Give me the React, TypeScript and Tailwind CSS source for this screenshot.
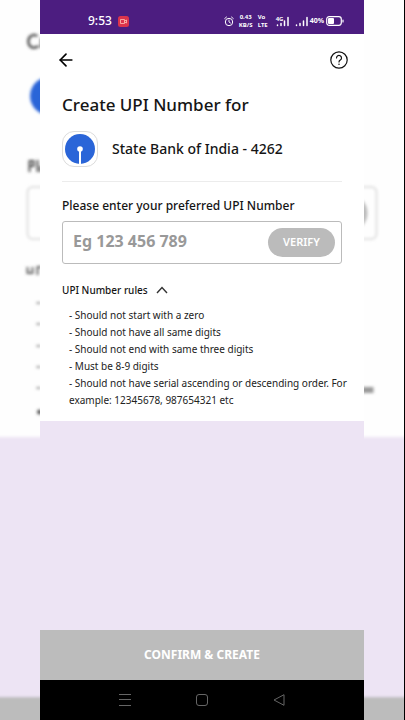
import { useState } from 'react';
import { ArrowLeft } from 'lucide-react';

const RULES = [
  'Should not start with a zero',
  'Should not have all same digits',
  'Should not end with same three digits',
  'Must be 8-9 digits',
  'Should not have serial ascending or descending order. For example: 12345678, 987654321 etc',
];

// Soft, enlarged echo of the screen that fills the sides
function Backdrop() {
  return (
    <svg className="absolute inset-0 h-full w-full" viewBox="0 0 405 720" preserveAspectRatio="xMidYMid slice" aria-hidden="true">
      <defs>
        <filter id="soft" x="-10%" y="-10%" width="120%" height="120%">
          <feGaussianBlur stdDeviation="1.800" />
        </filter>
      </defs>
      <rect width="405" height="720" fill="#fefefe" />
      <g filter="url(#soft)">
        <rect x="-20" y="437" width="445" height="260" fill="#ede4f4" />
        <rect x="-20" y="697" width="445" height="50" fill="#bcbcbc" />
        <path d="M38 36C32 33 28 38 29 43c1 5 6 6 10 3M42 38v10" fill="none" stroke="#555" strokeWidth="2.500" />
        <circle cx="49.500" cy="96" r="19" fill="#2a65d8" />
        <path d="M30 172v-11h4v5h-4M38 160v12M41 166v6" fill="none" stroke="#555" strokeWidth="2" />
        <rect x="28" y="187" width="349" height="52" rx="5" fill="none" stroke="#d6d6d6" strokeWidth="1.500" />
        <rect x="284" y="195" width="84" height="36" rx="18" fill="#bbb" />
        <path d="M28 267v6h5v-6M38 275v-8h4" fill="none" stroke="#666" strokeWidth="2" />
        <path d="M37 303h4M37 324h4M37 346h4M37 367h4M37 388h4" fill="none" stroke="#999" strokeWidth="1.800" />
        <circle cx="40" cy="412" r="2.500" fill="#555" />
        <path d="M360 390h14" fill="none" stroke="#999" strokeWidth="6" />
      </g>
    </svg>
  );
}

function Bars() {
  return (
    <svg width="13" height="11" viewBox="0 0 13 11" fill="none" stroke="#fff" strokeWidth="1.500" strokeLinecap="round" aria-hidden="true">
      <path d="M1.500 9.500v-.5M5 9.500V7.500M8.500 9.500V5M12 9.500V1.500" />
    </svg>
  );
}

function StatusBar() {
  return (
    <div className="flex h-[34px] items-center bg-[#4c1d80] pt-2 pr-5 pl-12 text-white">
      <span className="text-xs font-medium">9:53</span>
      <svg className="ml-1.5" width="11" height="11" viewBox="0 0 11 11" fill="none" aria-hidden="true">
        <rect width="11" height="11" rx="2.500" fill="#dc344c" />
        <path d="M2.500 3.500h4v4h-4zM6.500 5l2-1v3l-2-1" stroke="#ffc2b5" strokeWidth=".8" />
      </svg>
      <div className="ml-auto flex items-center">
        <svg width="10" height="11" viewBox="0 0 10 11" fill="none" stroke="#fff" aria-hidden="true">
          <circle cx="5" cy="6" r="3.700" />
          <path d="M5 4v2l1.500 1M.7 2.500 2.500 1M9.300 2.500 7.500 1" strokeWidth=".9" strokeLinecap="round" />
        </svg>
        <span className="ml-1 flex w-4 flex-col items-center text-[6px] leading-[8px] font-bold">
          <span className="leading-[7px]">0.43</span>
          <span>KB/S</span>
        </span>
        <span className="ml-1 flex w-3 flex-col text-[6px] leading-[8px] font-bold">
          <span className="leading-[7px]">Vo</span>
          <span>LTE</span>
        </span>
        <span className="relative ml-1.5">
          <Bars />
          <span className="absolute top-0 left-0 text-[6px] leading-[6px] font-bold">4G</span>
        </span>
        <span className="ml-1.5">
          <Bars />
        </span>
        <span className="ml-0.5 text-[7px] font-bold">40%</span>
        <svg className="ml-0.5" width="18" height="10" viewBox="0 0 18 10" fill="none" aria-hidden="true">
          <rect x=".7" y=".7" width="14.600" height="8.600" rx="2.500" stroke="#fff" strokeWidth="1.200" />
          <rect x="2" y="2" width="6" height="6" rx="1" fill="#fff" />
          <path d="M17 4v2" stroke="#fff" strokeWidth="1.200" strokeLinecap="round" />
        </svg>
      </div>
    </div>
  );
}

function BankLogo() {
  return (
    <span className="flex size-9 items-center justify-center rounded-xl border border-[#dcdcdc] bg-white">
      <svg width="30" height="30" viewBox="0 0 30 30" aria-hidden="true">
        <circle cx="15" cy="15" r="15" fill="#2a65d8" />
        <circle cx="15" cy="15" r="2.800" fill="#fff" />
        <path d="M15 15v15" stroke="#fff" strokeWidth="2" />
      </svg>
    </span>
  );
}

function NavBar() {
  return (
    <nav className="flex h-10 items-center justify-around bg-black px-[46px] text-[#666]">
      <button type="button" aria-label="Recent apps">
        <svg width="12" height="12" viewBox="0 0 12 12" stroke="currentColor" aria-hidden="true">
          <path d="M0 .5h12M0 5.500h12M0 11.500h12" />
        </svg>
      </button>
      <button type="button" aria-label="Home">
        <svg width="12" height="12" viewBox="0 0 12 12" fill="none" stroke="currentColor" aria-hidden="true">
          <rect x=".5" y=".5" width="11" height="11" rx="2.500" />
        </svg>
      </button>
      <button type="button" aria-label="Back">
        <svg width="12" height="12" viewBox="0 0 12 12" fill="none" stroke="currentColor" strokeLinejoin="round" aria-hidden="true">
          <path d="M11 .7v10.600L1 6z" />
        </svg>
      </button>
    </nav>
  );
}

export default function App() {
  const [number, setNumber] = useState('');
  const [open, setOpen] = useState(true);

  return (
    <div className="relative min-h-screen border-r border-black px-10 font-['Noto_Sans',sans-serif] text-[#151515]">
      <Backdrop />
      <div className="relative flex min-h-screen flex-col bg-[#ede4f4]">
        <StatusBar />

        <main className="bg-white px-[22px] pb-3">
          <header className="flex h-[52px] items-center justify-between">
            <button type="button" aria-label="Go back" className="-ml-1.5">
              <ArrowLeft size={20} strokeWidth={2} color="#000" />
            </button>
            <button type="button" aria-label="Help" className="-mr-1.5">
              <svg width="18" height="18" viewBox="0 0 18 18" fill="none" stroke="#111" strokeWidth="1.200" strokeLinecap="round" aria-hidden="true">
                <circle cx="9" cy="9" r="8.200" />
                <path d="M6.500 7a2.500 2.500 0 1 1 3.800 2.100C9.300 9.700 9 10 9 11" />
                <path d="M9 13.200v.1" strokeWidth="1.500" />
              </svg>
            </button>
          </header>

          <h1 className="mt-[7px] text-[17px] leading-6 font-medium">Create UPI Number for</h1>

          <div className="mt-3.5 flex items-center gap-3.5 border-b border-[#ececec] pb-3.5">
            <BankLogo />
            <span className="text-sm font-medium">State Bank of India - 4262</span>
          </div>

          <label htmlFor="upi-number" className="mt-4 block text-xs leading-4 font-medium">
            Please enter your preferred UPI Number
          </label>
          <div className="mt-[7px] flex h-[43px] items-center rounded-[3px] border border-[#bbb] pr-1.5 pl-2.5">
            <input
              id="upi-number"
              inputMode="numeric"
              value={number}
              onChange={e => setNumber(e.target.value)}
              placeholder="Eg 123 456 789"
              className="w-full min-w-0 pb-1 text-base font-bold outline-none placeholder:text-[#999]"
            />
            <button type="button" className="h-[29px] w-[67px] shrink-0 rounded-full bg-[#bbb] text-[11px] font-semibold text-white">
              VERIFY
            </button>
          </div>

          <button
            type="button"
            aria-expanded={open}
            onClick={() => setOpen(prev => !prev)}
            className="mt-[18px] flex items-center gap-2 text-[10px] leading-4 font-medium"
          >
            UPI Number rules
            <svg className={open ? '' : 'rotate-180'} width="12" height="8" viewBox="0 0 12 8" fill="none" stroke="#333" strokeWidth="1.400" aria-hidden="true">
              <path d="M1 7l5-5.500L11 7" />
            </svg>
          </button>

          {open && (
            <ul className="mt-[9px] -mr-3 pl-[7px] text-[10px] leading-[17px] text-[#222]">
              {RULES.map(rule => (
                <li key={rule}>{`- ${rule}`}</li>
              ))}
            </ul>
          )}
        </main>

        <div className="mt-auto">
          <button type="button" className="h-[50px] w-full bg-[#bcbcbc] text-xs font-bold text-white">
            CONFIRM &amp; CREATE
          </button>
          <NavBar />
        </div>
      </div>
    </div>
  );
}
